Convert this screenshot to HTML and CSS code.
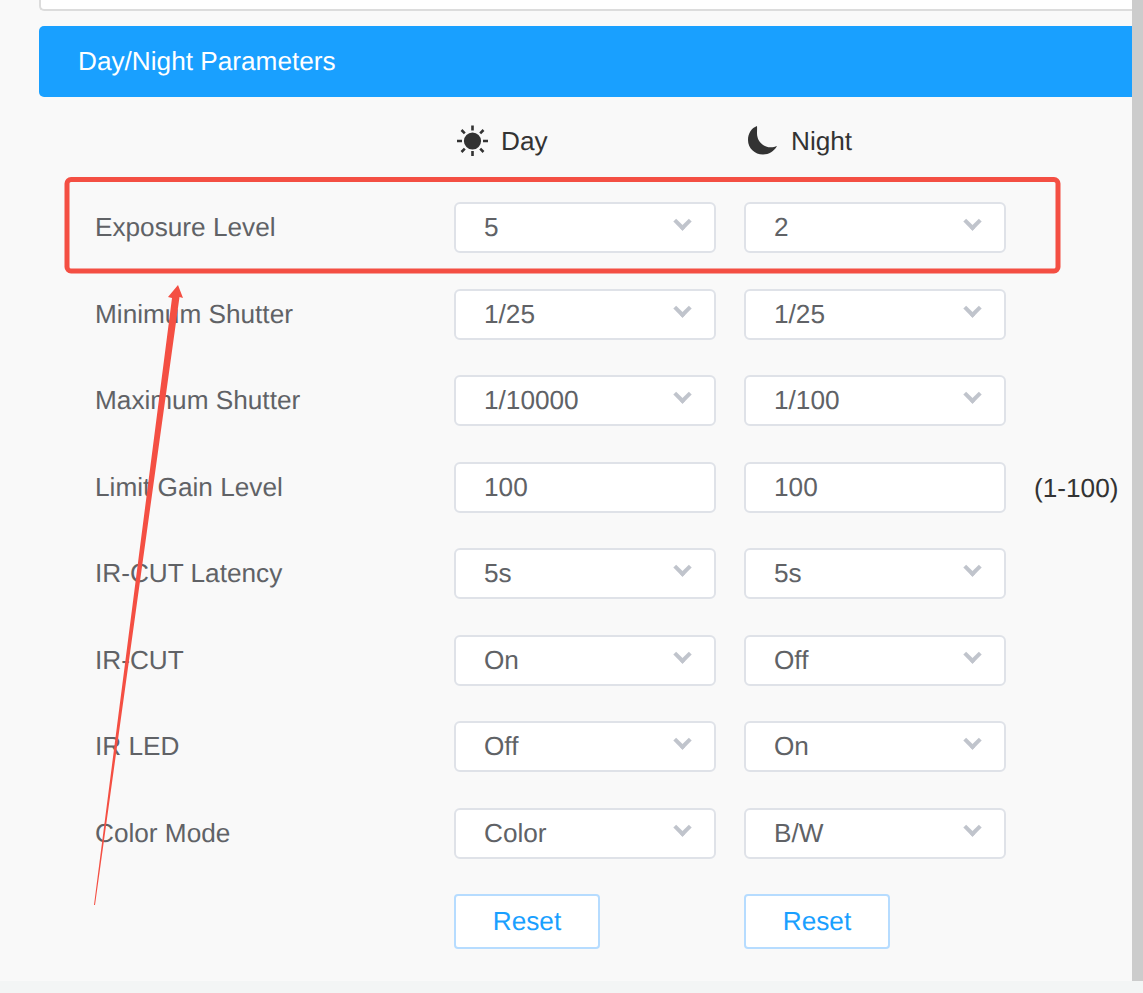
FILE: index.html
```html
<!DOCTYPE html>
<html>
    <head>
        <title>Day/Night Parameters</title>
        <link rel="stylesheet" href="styles.css">
    </head>
    <body>
        <div class="viewport">
            <div class="content">
                <div class="top-box"></div>
                <div class="section-title">Day/Night Parameters</div>
                <div class="params">
                    <div></div>
                    <div class="col-head">
                        <svg class="head-icon" width="34" height="34" viewBox="0 0 34 34">
                            <circle cx="17.500" cy="17" r="8.600" fill="#333"/>
                            <path d="M17.500 1.500v5M17.500 27v5M2 17h5M28 17h5M6.500 6l3.300 3.300M25.200 24.700l3.300 3.300M28.500 6l-3.300 3.300M9.800 24.700L6.500 28" stroke="#333" stroke-width="2.600" fill="none"/>
                        </svg>
                        Day
                    </div>
                    <div class="col-head">
                        <svg class="head-icon" width="34" height="34" viewBox="0 0 34 34">
                            <path d="M12 2C6.500 4 3 9.500 3 16c0 8.300 6.700 14.500 15 14.500 6 0 11-3.200 14-8.500-2 1-4 1.300-6 1.300-8 0-14-6-14-14 0-2.500.2-5 0-7.300z" fill="#333"/>
                        </svg>
                        Night
                    </div>
                    <div></div>

                    <div class="label">Exposure Level</div>
                    <div class="field select">5</div>
                    <div class="field select">2</div>
                    <div></div>

                    <div class="label">Minimum Shutter</div>
                    <div class="field select">1/25</div>
                    <div class="field select">1/25</div>
                    <div></div>

                    <div class="label">Maximum Shutter</div>
                    <div class="field select">1/10000</div>
                    <div class="field select">1/100</div>
                    <div></div>

                    <div class="label">Limit Gain Level</div>
                    <div class="field">100</div>
                    <div class="field">100</div>
                    <div class="range">(1-100)</div>

                    <div class="label">IR-CUT Latency</div>
                    <div class="field select">5s</div>
                    <div class="field select">5s</div>
                    <div></div>

                    <div class="label">IR-CUT</div>
                    <div class="field select">On</div>
                    <div class="field select">Off</div>
                    <div></div>

                    <div class="label">IR LED</div>
                    <div class="field select">Off</div>
                    <div class="field select">On</div>
                    <div></div>

                    <div class="label">Color Mode</div>
                    <div class="field select">Color</div>
                    <div class="field select">B/W</div>
                    <div></div>

                    <div></div>
                    <div><button class="reset-button">Reset</button></div>
                    <div><button class="reset-button">Reset</button></div>
                    <div></div>
                </div>
            </div>
            <div class="scrollbar"></div>
        </div>
        <svg class="annotation" width="1143" height="993" viewBox="0 0 1143 993">
            <rect x="67" y="179.500" width="991" height="91.500" rx="4" fill="none" stroke="#f44f43" stroke-width="5"/>
            <polygon points="94,905 172,298 168,297 178,285 183,298 179.500,297 95,905" fill="#f44f43"/>
        </svg>
    </body>
</html>
```

FILE: styles.css
```css
body {
    margin: 0;
    height: 993px;
    overflow: hidden;
    background-color: #f3f5f5;
    font-family: "Liberation Sans", Arial, sans-serif;
    font-size: 26.2px;
    color: #606266;
    text-rendering: geometricPrecision;
}
.viewport {
    display: flex;
    height: 981px;
    background-color: #f9f9f9;
}
.content {
    flex: 1;
    padding-left: 39px;
    min-width: 0;
}
.scrollbar {
    width: 11px;
    background-color: #cccccc;
}
.top-box {
    height: 9px;
    background-color: white;
    border: 2px solid #dcdcdc;
    border-top: none;
    border-right: none;
    border-radius: 0 0 0 5px;
}
.section-title {
    margin-top: 15px;
    height: 71px;
    padding-left: 39px;
    line-height: 70px;
    color: white;
    background-color: #19a0ff;
    border-radius: 5px 0 0 5px;
}
.params {
    display: grid;
    grid-template-columns: 331px 262px 262px 1fr;
    grid-auto-rows: 51px;
    column-gap: 28px;
    row-gap: 35.5px;
    padding: 18.85px 0 0 56px;
}
.col-head {
    display: flex;
    align-items: center;
    gap: 12px;
    color: #333333;
}
.head-icon {
    margin-left: 1px;
}
.label {
    line-height: 51px;
}
.field {
    display: flex;
    align-items: center;
    justify-content: space-between;
    box-sizing: border-box;
    height: 51px;
    padding: 0 25px 0 28px;
    background-color: white;
    border: 2px solid #dfe2e8;
    border-radius: 6px;
}
.select::after {
    content: "";
    box-sizing: border-box;
    width: 13px;
    height: 13px;
    margin-bottom: 12px;
    border-right: 4px solid #c0c4cc;
    border-bottom: 4px solid #c0c4cc;
    transform: rotate(45deg);
}
.range {
    line-height: 53px;
    color: #333333;
}
.reset-button {
    width: 146px;
    height: 55px;
    padding: 0;
    background-color: white;
    border: 2px solid #b6dcff;
    border-radius: 4px;
    color: #19a0ff;
    font-family: inherit;
    font-size: 26.2px;
    text-rendering: inherit;
}
.annotation {
    position: absolute;
    top: 0;
    left: 0;
    pointer-events: none;
}
```
